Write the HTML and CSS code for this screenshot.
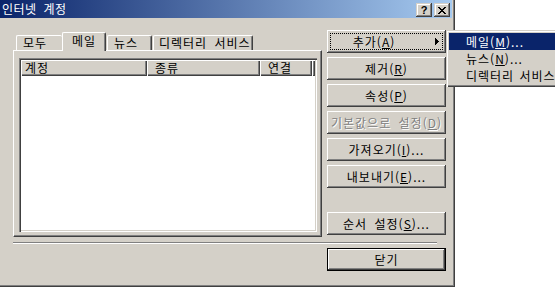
FILE: index.html
```html
<!DOCTYPE html>
<html lang="ko">
<head>
<meta charset="utf-8">
<title>인터넷 계정</title>
<link rel="stylesheet" href="styles.css">
</head>
<body>
<div class="window">
  <div class="titlebar">
    <span class="title">인터넷 계정</span>
    <div class="caption-buttons">
      <div class="cap-btn help">?</div>
      <div class="cap-btn close">
        <svg width="8" height="7" viewBox="0 0 8 7" shape-rendering="crispEdges"><path fill="#000" d="M0 0h2v1h-2z M6 0h2v1h-2z M1 1h2v1h-2z M5 1h2v1h-2z M2 2h4v1h-4z M3 3h2v1h-2z M2 4h4v1h-4z M1 5h2v1h-2z M5 5h2v1h-2z M0 6h2v1h-2z M6 6h2v1h-2z"/></svg>
      </div>
    </div>
  </div>
  <div class="content">
    <div class="main">
      <div class="left">
        <div class="tabs">
          <div class="tab t-all">모두</div>
          <div class="tab t-mail selected">메일</div>
          <div class="tab t-news">뉴스</div>
          <div class="tab t-dir">디렉터리 서비스</div>
        </div>
        <div class="panel">
          <div class="listview">
            <div class="header">
              <div class="col c1">계정</div>
              <div class="col c2">종류</div>
              <div class="col c3">연결</div>
              <div class="col filler"></div>
            </div>
          </div>
        </div>
      </div>
      <div class="right">
        <div class="btn focus submenu"><span class="label">추가(<u>A</u>)</span><svg class="arrow" width="4" height="7" viewBox="0 0 4 7" shape-rendering="crispEdges"><path fill="#000" d="M0 0h1v7h-1z M1 1h1v5h-1z M2 2h1v3h-1z M3 3h1v1h-1z"/></svg></div>
        <div class="btn">제거(<u>R</u>)</div>
        <div class="btn">속성(<u>P</u>)</div>
        <div class="btn disabled">기본값으로 설정(<u>D</u>)</div>
        <div class="btn">가져오기(<u>I</u>)...</div>
        <div class="btn">내보내기(<u>E</u>)...</div>
        <div class="btn order">순서 설정(<u>S</u>)...</div>
      </div>
    </div>
    <div class="separator"></div>
    <div class="bottom">
      <div class="btn default">닫기</div>
    </div>
  </div>
</div>
<div class="menu">
  <div class="menu-item active">메일(<u>M</u>)...</div>
  <div class="menu-item">뉴스(<u>N</u>)...</div>
  <div class="menu-item">디렉터리 서비스</div>
</div>
</body>
</html>
```

FILE: styles.css
```css
html, body {
  margin: 0;
  padding: 0;
  background: #fff;
  overflow: hidden;
}
body {
  width: 555px;
  height: 287px;
  position: relative;
  font-family: "Noto Sans CJK KR", "Noto Sans", sans-serif;
  font-size: 12px;
  letter-spacing: 1px;
  word-spacing: 3px;
  color: #000;
}
u { text-underline-offset: 1px; }

.window {
  width: 455px;
  height: 287px;
  box-sizing: border-box;
  background: #d4d0c8;
  border-right: 1px solid #404040;
  border-bottom: 1px solid #404040;
  box-shadow: inset -1px -1px 0 #808080;
  padding-right: 1px;
  display: flex;
  flex-direction: column;
}

.titlebar {
  width: 452px;
  height: 18px;
  flex: none;
  background: linear-gradient(to right, #0a246a, #a6caf0);
  display: flex;
  align-items: center;
  justify-content: space-between;
  color: #fff;
}
.title {
  padding-left: 2px;
  line-height: 18px;
  letter-spacing: 0.5px;
}
.caption-buttons {
  display: flex;
  gap: 2px;
  padding-right: 2px;
  align-self: flex-start;
  margin-top: 3px;
}
.cap-btn {
  width: 16px;
  height: 14px;
  box-sizing: border-box;
  background: #d4d0c8;
  box-shadow: inset -1px -1px #404040, inset 1px 1px #d4d0c8, inset -2px -2px #808080, inset 2px 2px #fff;
  display: flex;
  align-items: center;
  justify-content: center;
  color: #000;
  letter-spacing: 0;
}
.cap-btn.help {
  font-family: "Liberation Sans", Arial, sans-serif;
  font-weight: bold;
  font-size: 11px;
  line-height: 14px;
}

.content {
  flex: 1;
  padding: 12px 0 0 13px;
  display: flex;
  flex-direction: column;
}
.main {
  display: flex;
  gap: 5px;
}
.left {
  width: 309px;
  padding-top: 2px;
  display: flex;
  flex-direction: column;
}
.tabs {
  display: flex;
  align-items: flex-end;
  height: 18px;
  padding-left: 3px;
  position: relative;
  z-index: 1;
}
.tab {
  box-sizing: border-box;
  height: 15px;
  border-top: 1px solid #fff;
  border-left: 1px solid #fff;
  border-right: 1px solid #404040;
  box-shadow: inset -1px 0 #808080;
  border-radius: 2px 2px 0 0;
  padding-left: 6px;
  line-height: 14px;
  white-space: nowrap;
}
.t-all { width: 46px; border-right: none; box-shadow: none; }
.t-mail { width: 44px; }
.t-news { width: 45px; margin-left: 1px; }
.t-dir { width: 100px; margin-left: 1px; padding-left: 5px; }
.tab.selected {
  height: 19px;
  margin-bottom: -1px;
  background: #d4d0c8;
  text-align: center;
  padding: 0;
  line-height: 16px;
}

.panel {
  height: 187px;
  box-sizing: border-box;
  border-top: 1px solid #fff;
  border-left: 1px solid #fff;
  border-right: 1px solid #404040;
  border-bottom: 1px solid #404040;
  box-shadow: inset -1px -1px #808080;
  padding: 7px 4px 4px 5px;
  display: flex;
}
.listview {
  flex: 1;
  box-sizing: border-box;
  background: #fff;
  box-shadow: inset 1px 1px #808080, inset 2px 2px #404040, inset -1px -1px #fff, inset -2px -2px #d4d0c8;
  padding: 2px;
}
.header {
  display: flex;
  height: 16px;
}
.col {
  box-sizing: border-box;
  background: #d4d0c8;
  box-shadow: inset 1px 1px #fff, inset -1px -1px #404040, inset -2px -2px #808080;
  padding-left: 6px;
  line-height: 15px;
  white-space: nowrap;
}
.c1 { width: 126px; padding-left: 4px; }
.c2 { width: 113px; padding-left: 8px; }
.c3 { width: 52px; padding-left: 8px; }
.filler { flex: 1; padding: 0; }

.right {
  width: 119px;
  display: flex;
  flex-direction: column;
  gap: 4px;
}
.btn {
  height: 23px;
  box-sizing: border-box;
  background: #d4d0c8;
  box-shadow: inset -1px -1px #404040, inset 1px 1px #fff, inset -2px -2px #808080;
  display: flex;
  align-items: center;
  justify-content: center;
  white-space: nowrap;
}
.btn.focus {
  outline: 1px dotted #000;
  outline-offset: -4px;
}
.btn.submenu .label {
  flex: 1;
  text-align: center;
}
.btn.submenu .arrow {
  margin: 0 7px 0 14px;
}
.btn.disabled {
  color: #808080;
  text-shadow: 1px 1px 0 #fff;
}
.btn.order { margin-top: 20px; }

.separator {
  width: 424px;
  height: 2px;
  box-sizing: border-box;
  border-top: 1px solid #808080;
  border-bottom: 1px solid #fff;
  margin-top: 5px;
}
.bottom {
  margin-top: 4px;
  padding-left: 314px;
  display: flex;
}
.btn.default {
  width: 119px;
  border: 1px solid #000;
}

.menu {
  position: absolute;
  left: 446px;
  right: 0;
  top: 30px;
  background: #d4d0c8;
  box-shadow: inset 1px 1px #d4d0c8, inset 2px 2px #fff, inset 0 -1px #404040, inset 0 -2px #808080;
  padding: 3px 0 3px 3px;
  word-spacing: 1px;
}
.menu-item {
  height: 17px;
  line-height: 17px;
  padding-left: 17px;
  white-space: nowrap;
}
.menu-item.active {
  background: #0a246a;
  color: #fff;
}
```
